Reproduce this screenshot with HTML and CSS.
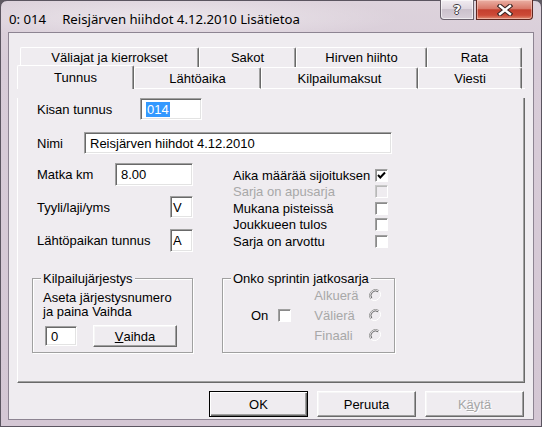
FILE: index.html
```html
<!DOCTYPE html>
<html lang="fi">
  <head>
    <meta charset="UTF-8" />
    <title>0: 014 Reisjärven hiihdot 4.12.2010 Lisätietoa</title>
    <link rel="stylesheet" href="styles.css">
  </head>
  <body>
    <div class="window">
      <div class="titlebar">
        <div class="title">
          <span class="title-id">0: 014</span>
          <span>Reisjärven hiihdot 4.12.2010 Lisätietoa</span>
        </div>
        <div class="caption-btns">
          <div class="cap help"><span>?</span></div>
          <div class="cap close">
            <svg width="16" height="12" viewBox="0 0 16 12">
              <path d="M3 2 L13 10 M13 2 L3 10" stroke="#3b2624" stroke-width="4.6" stroke-linecap="square" />
              <path d="M3 2 L13 10 M13 2 L3 10" stroke="#fff" stroke-width="2.4" stroke-linecap="square" />
            </svg>
          </div>
        </div>
      </div>

      <div class="client">
        <div class="tabs">
          <div class="tab-row back">
            <div class="tab" style="width:179px">Väliajat ja kierrokset</div>
            <div class="tab" style="width:97px">Sakot</div>
            <div class="tab" style="width:131px">Hirven hiihto</div>
            <div class="tab" style="width:95px">Rata</div>
          </div>
          <div class="tab-row front">
            <div class="tab active" style="width:117px">Tunnus</div>
            <div class="tab" style="width:127px">Lähtöaika</div>
            <div class="tab" style="width:157px">Kilpailumaksut</div>
            <div class="tab" style="width:104px">Viesti</div>
            <div class="tab-fill"></div>
          </div>
        </div>

        <div class="panel">
          <div class="field r1">
            <span class="lbl" style="width:103px">Kisan tunnus</span>
            <div class="edit" style="width:62px"><span class="selected">014</span></div>
          </div>
          <div class="field r2">
            <span class="lbl" style="width:47px">Nimi</span>
            <div class="edit" style="width:308px">Reisjärven hiihdot 4.12.2010</div>
          </div>

          <div class="cols">
            <div class="col-left">
              <div class="field tall">
                <span class="lbl" style="width:78px">Matka km</span>
                <div class="edit" style="width:78px">8.00</div>
              </div>
              <div class="field gap10">
                <span class="lbl" style="width:133px">Tyyli/laji/yms</span>
                <div class="edit narrow" style="width:23px">V</div>
              </div>
              <div class="field tall gap11">
                <span class="lbl" style="width:133px">Lähtöpaikan tunnus</span>
                <div class="edit narrow" style="width:23px">A</div>
              </div>
            </div>
            <div class="col-right">
              <div class="check-row">
                <span class="check-lbl">Aika määrää sijoituksen</span>
                <span class="check">
                  <svg width="11" height="11" viewBox="0 0 11 11"><path d="M2 5 L4.3 7.5 L9 2.5" fill="none" stroke="#000" stroke-width="2" /></svg>
                </span>
              </div>
              <div class="check-row disabled">
                <span class="check-lbl">Sarja on apusarja</span>
                <span class="check"></span>
              </div>
              <div class="check-row">
                <span class="check-lbl">Mukana pisteissä</span>
                <span class="check"></span>
              </div>
              <div class="check-row">
                <span class="check-lbl">Joukkueen tulos</span>
                <span class="check"></span>
              </div>
              <div class="check-row">
                <span class="check-lbl">Sarja on arvottu</span>
                <span class="check"></span>
              </div>
            </div>
          </div>

          <div class="groups">
            <fieldset class="group order">
              <legend>Kilpailujärjestys</legend>
              <div class="group-text">Aseta järjestysnumero<br>ja paina Vaihda</div>
              <div class="order-row">
                <div class="edit order-edit">0</div>
                <div class="btn vaihda"><u>V</u>aihda</div>
              </div>
            </fieldset>
            <fieldset class="group sprint">
              <legend>Onko sprintin jatkosarja</legend>
              <div class="sprint-body">
                <span>On</span>
                <span class="check on-check"></span>
                <div class="radios">
                  <div class="radio-row"><span class="radio-lbl">Alkuerä</span><svg class="radio" width="12" height="12" viewBox="0 0 12 12"><path d="M10.2 1.8 A6 6 0 0 0 1.8 10.2" fill="none" stroke="#a0a0a0" /><path d="M1.8 10.2 A6 6 0 0 0 10.2 1.8" fill="none" stroke="#fff" /><path d="M9.2 2.8 A4.6 4.6 0 0 0 2.8 9.2" fill="none" stroke="#696969" /></svg></div>
                  <div class="radio-row"><span class="radio-lbl">Välierä</span><svg class="radio" width="12" height="12" viewBox="0 0 12 12"><path d="M10.2 1.8 A6 6 0 0 0 1.8 10.2" fill="none" stroke="#a0a0a0" /><path d="M1.8 10.2 A6 6 0 0 0 10.2 1.8" fill="none" stroke="#fff" /><path d="M9.2 2.8 A4.6 4.6 0 0 0 2.8 9.2" fill="none" stroke="#696969" /></svg></div>
                  <div class="radio-row"><span class="radio-lbl">Finaali</span><svg class="radio" width="12" height="12" viewBox="0 0 12 12"><path d="M10.2 1.8 A6 6 0 0 0 1.8 10.2" fill="none" stroke="#a0a0a0" /><path d="M1.8 10.2 A6 6 0 0 0 10.2 1.8" fill="none" stroke="#fff" /><path d="M9.2 2.8 A4.6 4.6 0 0 0 2.8 9.2" fill="none" stroke="#696969" /></svg></div>
                </div>
              </div>
            </fieldset>
          </div>
        </div>

        <div class="dlg-buttons">
          <div class="btn default">OK</div>
          <div class="btn">Peruuta</div>
          <div class="btn disabled">K<u>ä</u>ytä</div>
        </div>
      </div>
    </div>
  </body>
</html>
```

FILE: styles.css
```css
* {
  margin: 0;
  padding: 0;
  box-sizing: border-box;
}

body {
  width: 542px;
  height: 427px;
  overflow: hidden;
  background: #5f5a62;
  font-family: "Liberation Sans", Arial, sans-serif;
  font-size: 13px;
  color: #000;
}

.window {
  width: 542px;
  height: 427px;
  display: flex;
  flex-direction: column;
  border: 1px solid #5b5560;
  border-radius: 7px 7px 0 0;
  background: linear-gradient(180deg, #ddd3dc 0, #d8ccd8 60px, #d4c7d4 100%);
}

/* title bar */
.titlebar {
  height: 31px;
  display: flex;
  background: radial-gradient(ellipse 230px 22px at 170px 17px, rgba(255, 255, 255, 0.45), rgba(255, 255, 255, 0) 100%);
}

.title {
  flex: 1;
  display: flex;
  align-items: center;
  gap: 16px;
  padding: 5px 0 0 8px;
  font-family: "Noto Sans", "Open Sans", sans-serif;
  font-size: 13.2px;
  color: #000;
  white-space: nowrap;
}

.caption-btns {
  display: flex;
  gap: 2px;
  margin-right: 8px;
  margin-top: -1px;
}

.cap {
  height: 20px;
  display: flex;
  align-items: center;
  justify-content: center;
  border: 1px solid #6a626d;
  border-top: none;
}

.help {
  width: 34px;
  border-radius: 0 0 0 4px;
  background: linear-gradient(180deg, #f1ecf1 0, #dfd7e0 45%, #cbc1cc 50%, #d8cfd9 100%);
  box-shadow: inset 0 0 0 1px rgba(255, 255, 255, 0.6);
}

.help span {
  font-family: "DejaVu Sans", sans-serif;
  font-weight: bold;
  font-size: 13px;
  color: #fff;
  text-shadow: -1px 0 #3e3a40, 1px 0 #3e3a40, 0 -1px #3e3a40, 0 1px #3e3a40;
}

.close {
  width: 57px;
  border-color: #5e2720;
  border-radius: 0 0 4px 0;
  background: linear-gradient(180deg, #eab0a4 0, #d9796a 45%, #c43f2e 52%, #cd4a37 80%, #e08b73 100%);
  box-shadow: inset 0 0 0 1px rgba(255, 220, 210, 0.5);
}

/* client area */
.client {
  margin: 0 7px;
  height: 388px;
  background: #efecf0;
  border: 1px solid #8d8492;
}

.tabs {
  margin: 14px 0 0 8px;
  width: 508px;
}

.tab-row {
  display: flex;
}

.tab-row.back {
  padding-left: 3px;
}

.tab {
  height: 20px;
  display: flex;
  align-items: center;
  justify-content: center;
  background: #efecf0;
  border-top: 1px solid #fff;
  border-left: 1px solid #fff;
  border-right: 1px solid #696969;
  box-shadow: inset -1px 0 #a0a0a0;
  border-radius: 2px 2px 0 0;
  white-space: nowrap;
}

.front .tab {
  height: 22px;
  border-bottom: 1px solid #fff;
}

.front .tab.active {
  height: 24px;
  margin-top: -2px;
  border-bottom: none;
}

.tab-fill {
  flex: 1;
  border-bottom: 1px solid #fff;
}

.panel {
  margin-left: 8px;
  width: 508px;
  height: 285px;
  border-left: 1px solid #fff;
  border-right: 1px solid #696969;
  border-bottom: 1px solid #696969;
  box-shadow: inset -1px -1px #a0a0a0;
}

.field {
  display: flex;
  align-items: center;
  height: 22px;
}

.field.tall {
  height: 23px;
}

.r1 {
  margin-top: 9px;
  padding-left: 19px;
}

.r2 {
  margin-top: 12px;
  padding-left: 19px;
}

.gap10 {
  margin-top: 10px;
}

.gap11 {
  margin-top: 11px;
}

.lbl {
  flex: none;
  white-space: nowrap;
}

.edit {
  height: 100%;
  display: flex;
  align-items: center;
  padding-left: 5px;
  background: #fff;
  border: 1px solid;
  border-color: #a0a0a0 #fff #fff #a0a0a0;
  box-shadow: inset 1px 1px #696969, inset -1px -1px #e3e3e3;
  white-space: nowrap;
}

.edit.narrow {
  padding-left: 2px;
}

.selected {
  background: #3399ff;
  color: #fff;
  line-height: 15px;
  padding: 0 1px;
}

.cols {
  display: flex;
  margin-top: 9px;
  padding-left: 19px;
}

.col-left {
  width: 196px;
}

.col-right {
  padding-top: 4px;
}

.check-row {
  height: 16.5px;
  display: flex;
  align-items: center;
}

.check-lbl {
  width: 142px;
  white-space: nowrap;
}

.check {
  width: 13px;
  height: 13px;
  display: flex;
  align-items: center;
  justify-content: center;
  background: #fff;
  border: 1px solid;
  border-color: #a0a0a0 #fff #fff #a0a0a0;
  box-shadow: inset 1px 1px #8a8a8a;
}

.check-row.disabled .check-lbl {
  color: #a8a8a8;
}

.check-row.disabled .check {
  background: #efecf0;
  border-color: #c8c8c8 #fff #fff #c8c8c8;
  box-shadow: inset 1px 1px #b8b8b8;
}

/* group boxes */
.groups {
  display: flex;
  gap: 29px;
  margin-top: 19px;
  padding-left: 14px;
}

.group {
  border: 1px solid #a0a0a0;
  box-shadow: 1px 1px #fff, inset 1px 1px #fff;
  padding: 0 8px 5px;
}

.group legend {
  padding: 0 2px;
  line-height: 15px;
  background: #efecf0;
}

.order {
  width: 161px;
}

.sprint {
  width: 173px;
}

.group-text {
  margin-top: 5px;
  padding-left: 2px;
  line-height: 14px;
}

.order-row {
  display: flex;
  align-items: center;
  margin-top: 6px;
  height: 22px;
}

.order-edit {
  width: 32px;
  height: 20px;
  margin-left: 4px;
}

.btn {
  display: flex;
  align-items: center;
  justify-content: center;
  background: #efecf0;
  border: 1px solid;
  border-color: #fff #696969 #696969 #fff;
  box-shadow: inset -1px -1px #a0a0a0, inset 1px 1px #f6f6f6;
  white-space: nowrap;
}

.vaihda {
  width: 84px;
  height: 22px;
  margin-left: 16px;
}

.sprint-body {
  display: flex;
  align-items: center;
  padding-left: 20px;
  margin-top: -1px;
}

.on-check {
  margin-left: 10px;
}

.radios {
  margin-left: 23px;
}

.radio-row {
  height: 20px;
  display: flex;
  align-items: center;
}

.radio-lbl {
  width: 55px;
  color: #a8a8a8;
}

/* dialog buttons */
.dlg-buttons {
  display: flex;
  justify-content: flex-end;
  gap: 9px;
  margin-top: 8px;
  padding-right: 9px;
}

.dlg-buttons .btn {
  width: 99px;
  height: 26px;
}

.btn.default {
  border-color: #000;
  box-shadow: inset 1px 1px #fff, inset -1px -1px #696969, inset -2px -2px #a0a0a0;
}

.btn.disabled {
  color: #a6a6a6;
  text-shadow: 1px 1px #fff;
}
```
